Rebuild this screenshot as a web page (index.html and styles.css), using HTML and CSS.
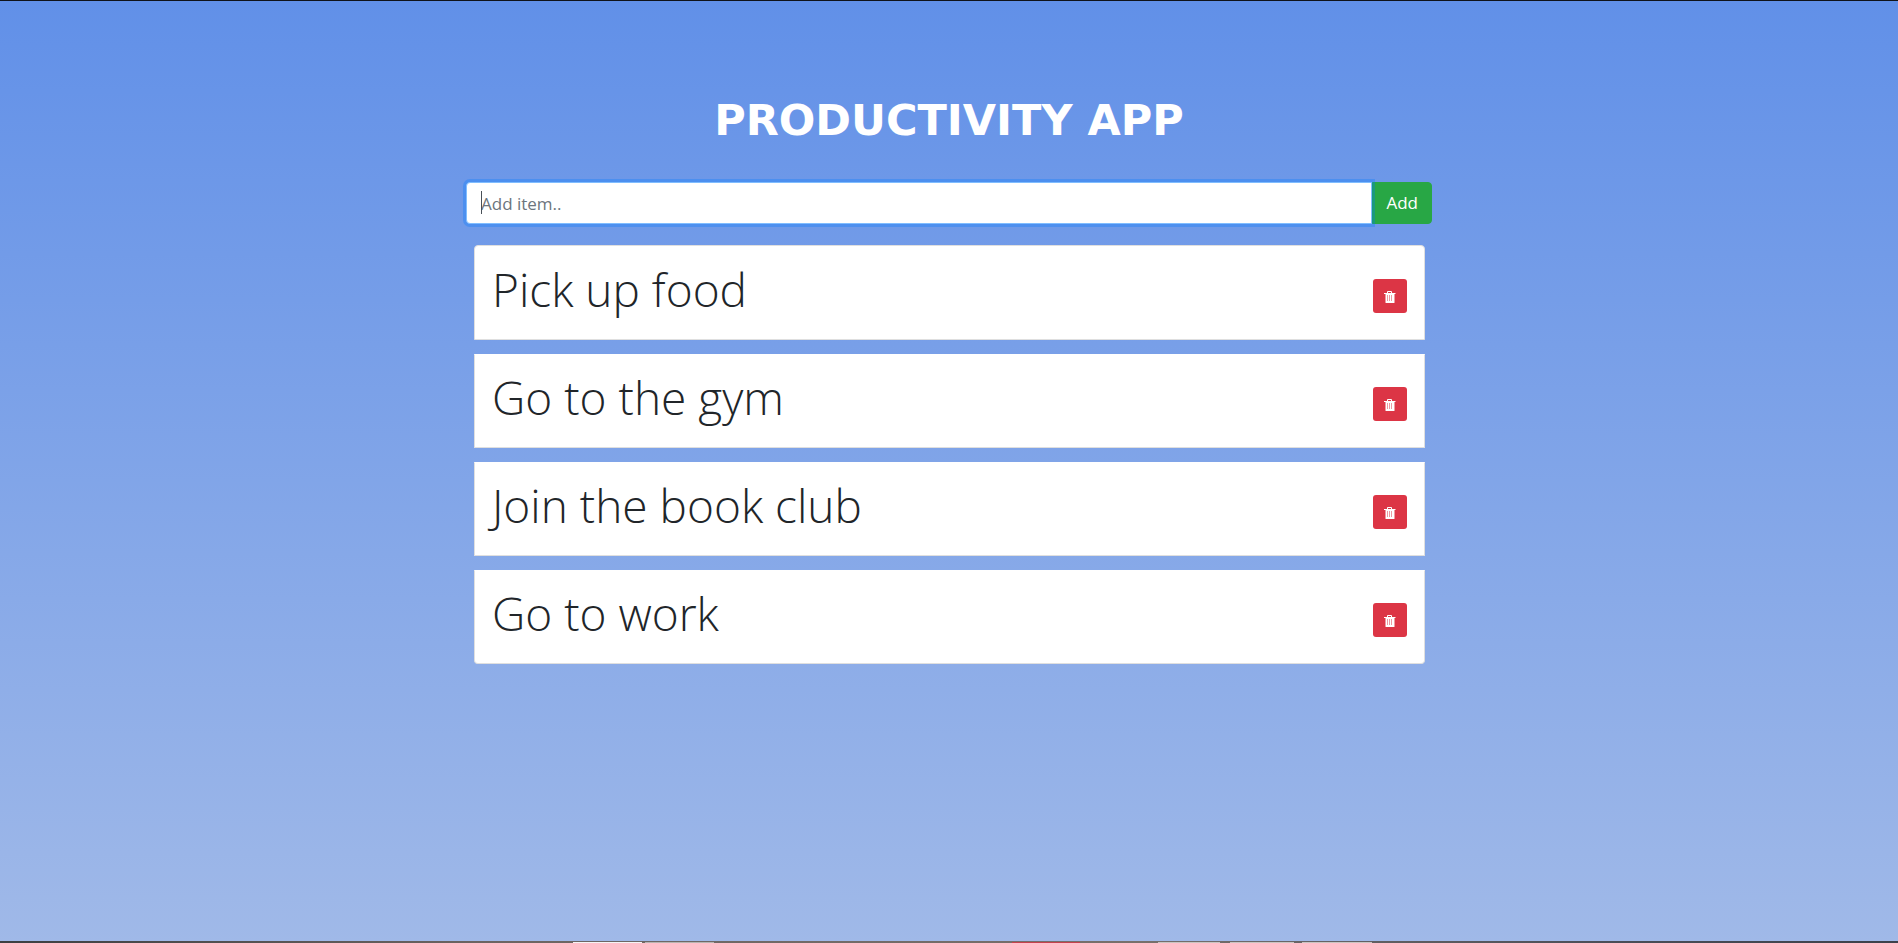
FILE: index.html
```html
<!DOCTYPE html>
<html lang="en">
<head>
<meta charset="utf-8">
<title>Productivity App</title>
<link rel="stylesheet" href="styles.css">
</head>
<body>
<svg class="symbols" aria-hidden="true">
  <symbol id="trash" viewBox="0 0 12 12">
    <path fill="currentColor" fill-rule="evenodd" d="M3 2V1q0-1 1-1h3q1 0 1 1v1h3.500v1h-1v8.500q0 .5-.5.5h-8q-.5 0-.5-.5V3H0V2zm1 0h3V1h-3z"/>
    <path fill="none" stroke="#dc3545" stroke-opacity=".5" d="M3.500 4v6M5.500 4v6M7.500 4v6"/>
  </symbol>
</svg>
<main class="app">
  <h1 class="title">Productivity App</h1>
  <form class="add-form">
    <input class="add-input" type="text" placeholder="Add item.." aria-label="Add item" autofocus>
    <button class="add-button" type="button">Add</button>
  </form>
  <ul class="items">
    <li class="item"><span class="item-text">Pick up food</span><button class="delete" type="button" aria-label="Delete Pick up food"><svg class="icon"><use href="#trash"/></svg></button></li>
    <li class="item"><span class="item-text">Go to the gym</span><button class="delete" type="button" aria-label="Delete Go to the gym"><svg class="icon"><use href="#trash"/></svg></button></li>
    <li class="item"><span class="item-text">Join the book club</span><button class="delete" type="button" aria-label="Delete Join the book club"><svg class="icon"><use href="#trash"/></svg></button></li>
    <li class="item"><span class="item-text">Go to work</span><button class="delete" type="button" aria-label="Delete Go to work"><svg class="icon"><use href="#trash"/></svg></button></li>
  </ul>
</main>
<div class="desktop-edge"></div>
</body>
</html>
```
FILE: styles.css
```css
* { box-sizing: border-box; }
body {
  margin: 0;
  min-height: 100vh;
  display: flex;
  flex-direction: column;
  border-top: 1px solid #10131a;
  background: linear-gradient(#6190e8, #a0b9e8);
  color: #212529;
  font-family: "Open Sans", "Noto Sans", sans-serif;
  font-size: 17px;
}
.symbols { display: none; }
.app {
  flex: 1;
  width: 100%;
  max-width: 966px;
  margin: 0 auto;
  padding: 89px 0 24px;
}
.title {
  margin: 0 0 32px;
  color: #fff;
  font-family: "DejaVu Sans", sans-serif;
  font-size: 43px;
  font-weight: 700;
  line-height: 60px;
  text-align: center;
  text-transform: uppercase;
}
.add-form { display: flex; position: relative; }
/* Text caret of the focused, empty field */
.add-form::before {
  content: "";
  position: absolute;
  z-index: 2;
  top: 9px;
  left: 15px;
  width: 1px;
  height: 23px;
  background: #495057;
}
.add-input, .add-button {
  height: 42px;
  font: inherit;
  line-height: 26px;
}
.add-input {
  position: relative;
  flex: 1;
  min-width: 0;
  padding: 7px 14px;
  border: 1px solid #80bdff;
  border-radius: 4px 0 0 4px;
  background: #fff;
  color: #495057;
  caret-color: transparent;
  outline: none;
}
.add-input:focus { z-index: 1; box-shadow: 0 0 0 3px rgba(0, 123, 255, .3); }
.add-input::placeholder { color: #6c757d; }
.add-button {
  padding: 7px 13px;
  border: 1px solid #28a745;
  border-radius: 0 4px 4px 0;
  background: #28a745;
  color: #fff;
}
.items {
  display: grid;
  gap: 14px;
  margin: 21px 7px 0 8px;
  padding: 0;
  list-style: none;
}
.item {
  display: flex;
  align-items: center;
  justify-content: space-between;
  height: 94px;
  padding: 0 17px;
  border: 1px solid #dfdfdf;
  border-top-color: #fff;
  background: #fff;
}
.item:first-child { height: 95px; border-top-color: #dfdfdf; border-radius: 4px 4px 0 0; }
.item:last-child { border-radius: 0 0 4px 4px; }
.item-text {
  padding-bottom: 8px;
  font-size: 46px;
  font-weight: 300;
  line-height: 60px;
}
.delete {
  display: grid;
  place-items: center;
  width: 34px;
  height: 34px;
  margin-top: 6px;
  padding: 0;
  border: 0;
  border-radius: 3px;
  background: #dc3545;
  color: #fff;
}
.icon { width: 12px; height: 12px; margin-top: 2px; }
.desktop-edge {
  height: 2px;
  background:
    linear-gradient(90deg,
      transparent 30.2%, #f4f4f6 30.2% 33.8%,
      transparent 33.8% 34%, #b8b4b2 34% 37.6%,
      transparent 37.6% 53.3%, #c4424e 53.3% 56.9%,
      transparent 56.9% 61%, #c9c4c2 61% 64.3%,
      transparent 64.3% 64.8%, #c9c4c2 64.8% 68.2%,
      transparent 68.2% 68.6%, #c9c4c2 68.6% 72.3%,
      transparent 72.3%) bottom / 100% 1px no-repeat,
    linear-gradient(90deg, #3c3f42, #6b6462 25%, #77706c 60%, #4a4e58 85%, #3c414b);
}
```
